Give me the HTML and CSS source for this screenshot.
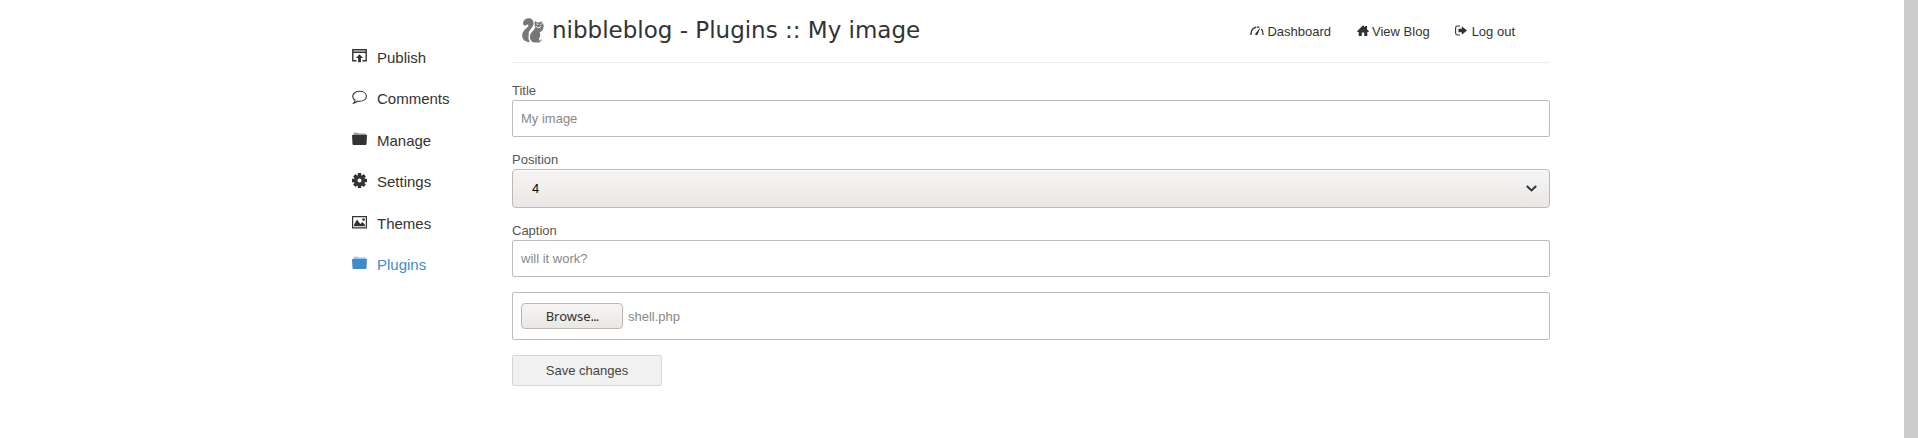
FILE: index.html
```html
<!DOCTYPE html>
<html lang="en">
<head>
<meta charset="utf-8">
<title>nibbleblog - Plugins :: My image</title>
<link rel="stylesheet" href="styles.css">
</head>
<body>
<div class="page">
  <nav class="sidebar">
    <a class="item"><svg width="15" height="15" viewBox="0 0 15 15"><path d="M4.500 11.700H.8V.8h13.400v10.900h-3.700M1 3.200h13" fill="none" stroke="currentColor" stroke-width="1.400"/><path d="M7.500 5.200 11 9H8.900v4.300H6.100V9H4z" fill="currentColor"/></svg><span>Publish</span></a>
    <a class="item"><svg width="15" height="15" viewBox="0 0 15 15"><path d="M7.600 1.300c3.800 0 6.800 2 6.800 5s-3 5-6.800 5c-.8 0-1.500-.1-2.200-.2-1 1.200-2.200 1.900-3.700 2.100.8-.8 1.300-1.600 1.400-2.900C1.500 9.300.7 8 .7 6.300c0-3 3.100-5 6.900-5z" fill="none" stroke="currentColor" stroke-width="1.100"/></svg><span>Comments</span></a>
    <a class="item"><svg width="15" height="15" viewBox="0 0 15 15"><path d="M1.500 3V1.300L2.300.7h3.400l.8.900h7l.5.700V3z" fill="currentColor" opacity=".5"/><path d="M0 3h15l-.5 9.200-.7.700H1.200l-.7-.7z" fill="currentColor"/></svg><span>Manage</span></a>
    <a class="item"><svg width="15" height="15" viewBox="0 0 15 15"><g stroke="currentColor" stroke-width="3.400"><path d="M7.500 0v15M0 7.500h15M2.300 2.300l10.400 10.400M12.700 2.300 2.300 12.700"/></g><circle cx="7.500" cy="7.500" r="5.500" fill="currentColor"/><circle cx="7.500" cy="7.500" r="2" fill="#fff"/></svg><span>Settings</span></a>
    <a class="item"><svg width="15" height="15" viewBox="0 0 15 15"><path d="M.6 1.600h13.800v11.300H.6z" fill="none" stroke="currentColor" stroke-width="1.200"/><path d="M2 11.300v-1.600l3-5.200 3.300 4.400L10.500 7l2.500 3v1.300z" fill="currentColor"/><circle cx="11.500" cy="4.600" r="1.300" fill="currentColor"/></svg><span>Themes</span></a>
    <a class="item active"><svg width="15" height="15" viewBox="0 0 15 15"><path d="M1.500 3V1.300L2.300.7h3.400l.8.900h7l.5.700V3z" fill="currentColor" opacity=".5"/><path d="M0 3h15l-.5 9.200-.7.700H1.200l-.7-.7z" fill="currentColor"/></svg><span>Plugins</span></a>
  </nav>
  <main class="content">
    <header class="header">
      <svg class="logo" width="22" height="25" viewBox="0 0 22 25"><path d="M6.800 16.500C6 12.500 11 10 11.500 6 11.800 2.500 9.800.2 6.900.2 3.200.2.900 2.900 1.100 5.700c.2 1.800 2.200 2.500 3.600 1.300C6 5.800 7 7 6 8.400 4.300 10.800.2 12.500.2 17.500c0 4.300 3.300 6.500 7.800 6.700C6.300 22 6.300 19.500 6.800 16.500z" fill="#777"/><path d="M13 3l1.700 1.200 2.300.2L19.600 3.200l.4 1.600c1.500 1.300 2 2.900 1.600 4.300-.3 2.700-1.800 4.600-4 5.200 1.300 2.500.6 4.900-.6 6.300l.2 2c.8.100 1.300.6 1.300 1.400-1.400.7-5.900.9-7.900.1-2.800-1.700-3.200-5.200-2.100-8 1-2.600 4.100-4.300 5-7.200-1.100-1.300-1.400-3.800-.5-5.900z" fill="#777"/><path d="M14.500 5.800l1.900.8M19.600 5.800l-1.400 1M14 8.400c1.600 1.800 3.700 1.700 5.200-.2" fill="none" stroke="#fff" stroke-width="1"/><circle cx="19" cy="22.300" r=".8" fill="#777"/></svg>
      <h1 class="title">nibbleblog - Plugins :: My image</h1>
      <div class="links">
        <a class="link dash"><svg width="14" height="12" viewBox="0 0 14 12"><path d="M.9 10C.9 6 2.600 3.100 6.100 2.200M6.700 2.100h2.600M11.500 3.800c1 1.400 1.500 3.400 1.600 6.200" fill="none" stroke="currentColor" stroke-width="1.300"/><path d="M10.500 2.200 7.600 9.400c-.5 1.200-2.900.9-2.400-.7z" fill="currentColor"/></svg><span>Dashboard</span></a>
        <a class="link blog"><svg width="12" height="12" viewBox="0 0 12 12"><path d="M6 .2 8 2.200V1h2v3.200l2 2.100-.7.700H10.300v4H7.200V7.600H4.800V11H1.700V7H.7L0 6.300z" fill="currentColor"/></svg><span>View Blog</span></a>
        <a class="link logout"><svg width="12" height="12" viewBox="0 0 12 12"><path d="M5 1H2.500C1.200 1 .6 1.700.6 2.900v5.200c0 1.200.6 1.900 1.900 1.900H5" fill="none" stroke="currentColor" stroke-width="1.100"/><path d="M3.500 3.700h3.300V1.300L12 5.500 6.800 9.700V7.300H3.500z" fill="currentColor"/></svg><span>Log out</span></a>
      </div>
    </header>
    <form class="form">
      <label class="label">Title</label>
      <div class="box input">My image</div>
      <label class="label position">Position</label>
      <div class="select"><span>4</span><svg width="11" height="7" viewBox="0 0 11 7"><path d="M.8 1 5.500 5.400 10.200 1" fill="none" stroke="#2e3436" stroke-width="2"/></svg></div>
      <label class="label caption">Caption</label>
      <div class="box input">will it work?</div>
      <div class="box file"><span class="browse">Browse<span class="dots">...</span></span><span class="filename">shell.php</span></div>
      <div class="save">Save changes</div>
    </form>
  </main>
  <div class="scrollbar"></div>
</div>
</body>
</html>
```
FILE: styles.css
```css
* { box-sizing: border-box; }
body {
  margin: 0;
  background: #fff;
  color: #333;
  font: 13px/16px "Liberation Sans", Arial, sans-serif;
}
.page { display: flex; height: 438px; overflow: hidden; }
svg { display: block; flex: none; }
.sidebar { width: 160px; margin-left: 352px; padding-top: 37.4px; flex: none; }
.item {
  display: flex;
  align-items: center;
  gap: 10px;
  height: 41.4px;
  font-size: 15px;
}
.item svg { margin-top: -3px; }
.active { color: #428bca; }
.content { width: 1038px; flex: none; }
.header {
  display: flex;
  height: 63px;
  border-bottom: 1px solid #eee;
}
.logo { margin: 18px 0 0 10px; }
.title {
  margin: 16px 0 0 8px;
  font: 23px/28px "DejaVu Sans", sans-serif;
  white-space: nowrap;
}
.links { display: flex; margin: 24px 35px 0 auto; }
.link { display: flex; gap: 4px; white-space: nowrap; }
.link svg { margin-top: 1px; }
.dash, .blog { gap: 3px; }
.dash { margin-right: 26px; }
.blog { margin-right: 25px; }
.logout { gap: 5px; }
.form { display: flex; flex-direction: column; padding-top: 20px; }
.label { height: 17px; color: #555; }
.position { margin-top: 15px; }
.caption { margin-top: 15px; }
.box {
  display: flex;
  align-items: center;
  border: 1px solid #bbb;
  border-radius: 2px;
  color: #888;
  padding: 0 8px;
}
.input { height: 37px; }
.select {
  display: flex;
  align-items: center;
  justify-content: space-between;
  height: 39px;
  padding: 0 12px 0 19px;
  border: 1px solid #bfb8b1;
  border-radius: 4px;
  background: linear-gradient(#f6f5f4, #e9e8e6);
  box-shadow: inset 0 1px #fff;
  color: #000;
}
.file { height: 48px; margin-top: 15px; gap: 5px; }
.browse {
  width: 102px;
  height: 26px;
  border: 1px solid #bfb8b1;
  border-radius: 4px;
  background: linear-gradient(#f6f5f4, #e9e8e6);
  color: #333;
  font: 13px/24px "Noto Sans", sans-serif;
  text-align: center;
}
.dots { letter-spacing: -0.9px; }
.filename { padding-top: 1px; }
.save {
  width: 150px;
  height: 31px;
  margin-top: 15px;
  border: 1px solid #d5d5d5;
  border-radius: 2px;
  background: #f1f1f1;
  color: #444;
  line-height: 29px;
  text-align: center;
}
.scrollbar { width: 14px; margin-left: auto; background: #cdcdcd; }
```
